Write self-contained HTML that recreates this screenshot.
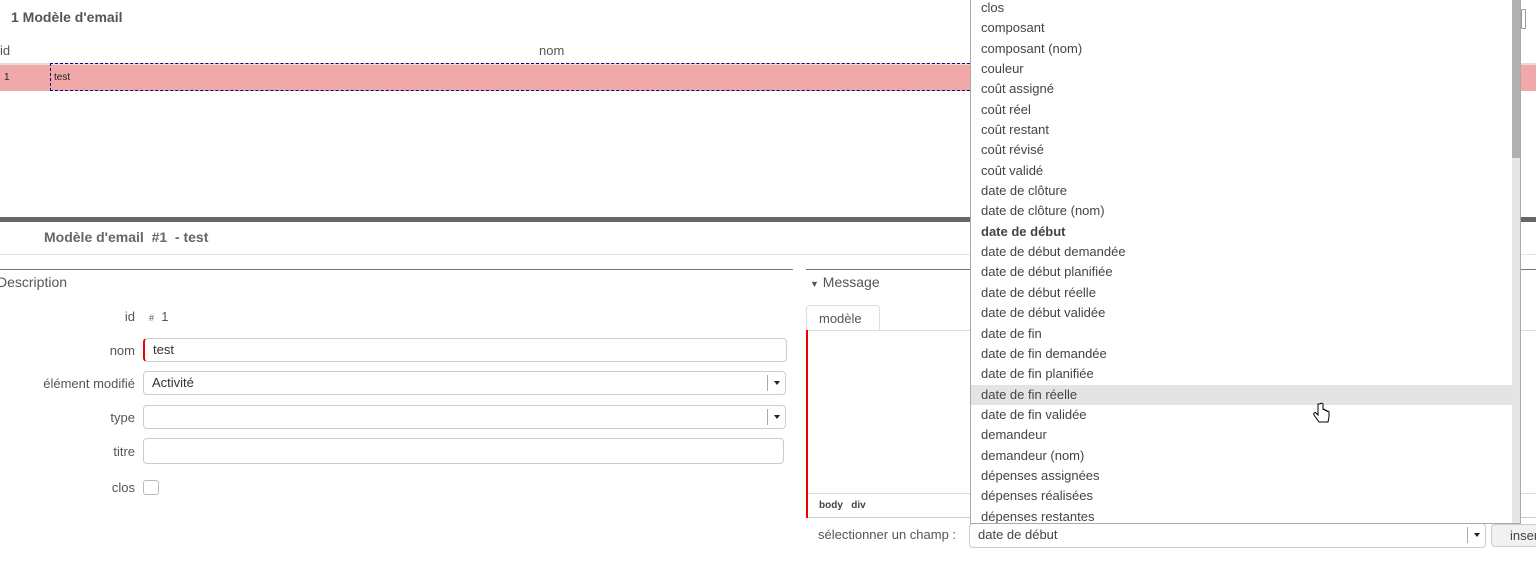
<!DOCTYPE html>
<html><head><meta charset="utf-8"><style>
*{box-sizing:border-box;margin:0;padding:0}
body{width:1536px;height:587px;overflow:hidden;background:#fff;font-family:"Liberation Sans",sans-serif;font-size:13px;color:#555;position:relative}
.a{position:absolute}
.inp{position:absolute;border:1px solid #ccc;border-radius:4px;background:#fff;height:24px;padding:3px 8px;color:#333}
.arr{position:absolute;right:0;top:3px;width:18px;height:16px;border-left:1px solid #aaa}
.arr:after{content:"";position:absolute;left:6px;top:6px;border:3.5px solid transparent;border-top:4px solid #222}
.lbl{position:absolute;right:1401px;text-align:right;width:140px}
.dd{position:absolute;left:970px;top:-2px;width:551px;height:526px;border:1px solid #aaa;border-top:none;background:#fff;overflow:hidden}
.dd div{height:20.35px;line-height:20.35px;padding-left:10px;color:#444}
</style></head><body>
<div class="a" style="left:11px;top:9px;font-weight:bold;font-size:14px;color:#555">1 Modèle d'email</div>
<div class="a" style="left:0;top:43px">id</div>
<div class="a" style="left:539px;top:43px">nom</div>
<div class="a" style="left:0;top:63px;width:1536px;height:28px;background:#f0a8a8;border-top:2px solid #ddd"></div>
<div class="a" style="left:4px;top:72px;font-size:10px;color:#222">1</div>
<div class="a" style="left:50px;top:63px;width:940px;height:28px;border:1px dashed #00008b;border-right:none;font-size:10px;color:#222;padding:8px 0 0 3px">test</div>
<div class="a" style="left:1521px;top:9px;width:5px;height:20px;border:1px solid #999;border-radius:1px"></div>
<div class="a" style="left:0;top:217px;width:1536px;height:5px;background:#666"></div>
<div class="a" style="left:44px;top:229px;font-weight:bold;font-size:14px;color:#666">Modèle d'email &nbsp;#1 &nbsp;- test</div>
<div class="a" style="left:0;top:254px;width:1536px;height:1px;background:#e5e5e5"></div>
<div class="a" style="left:0;top:269px;width:793px;height:1px;background:#777"></div>
<div class="a" style="left:-3px;top:274px;font-size:14px">Description</div>
<div class="a" style="left:806px;top:269px;width:730px;height:1px;background:#777"></div>
<div class="a" style="left:810px;top:274px;font-size:14px"><span style="font-size:9px">▼</span> Message</div>
<div class="lbl" style="top:309px">id</div>
<div class="a" style="left:149px;top:309px"><span style="font-size:9px">#</span> &nbsp;1</div>
<div class="lbl" style="top:343px">nom</div>
<div class="inp" style="left:143px;top:338px;width:644px;border-left:2px solid #e00">test</div>
<div class="lbl" style="top:376px">élément modifié</div>
<div class="inp" style="left:143px;top:371px;width:643px">Activité<span class="arr"></span></div>
<div class="lbl" style="top:410px">type</div>
<div class="inp" style="left:143px;top:405px;width:643px"><span class="arr"></span></div>
<div class="lbl" style="top:444px">titre</div>
<div class="inp" style="left:143px;top:438px;width:641px;height:26px"></div>
<div class="lbl" style="top:480px">clos</div>
<div class="a" style="left:143px;top:480px;width:16px;height:15px;border:1px solid #bbb;border-radius:3px"></div>
<div class="a" style="left:806px;top:305px;width:74px;height:26px;border:1px solid #ddd;border-bottom:none;border-radius:4px 4px 0 0;padding:5px 0 0 12px">modèle</div>
<div class="a" style="left:806px;top:330px;width:730px;height:1px;background:#ddd"></div>
<div class="a" style="left:806px;top:330px;width:2px;height:188px;background:#e00"></div>
<div class="a" style="left:808px;top:493px;width:728px;height:1px;background:#ddd"></div>
<div class="a" style="left:808px;top:517px;width:728px;height:1px;background:#ccc"></div>
<div class="a" style="left:819px;top:500px;font-size:10px;font-weight:bold;color:#444">body &nbsp;&nbsp;div</div>
<div class="a" style="left:818px;top:527px">sélectionner un champ :</div>
<div class="inp" style="left:969px;top:523px;width:517px;height:25px;color:#444">date de début<span class="arr"></span></div>
<div class="a" style="left:1491px;top:524px;width:60px;height:23px;border:1px solid #ccc;border-radius:4px;background:#f1f1f1;padding:3px 0 0 18px;color:#444">inser</div>
<div class="dd">
<div>clos</div><div>composant</div><div>composant (nom)</div><div>couleur</div><div>coût assigné</div><div>coût réel</div><div>coût restant</div><div>coût révisé</div><div>coût validé</div><div>date de clôture</div><div>date de clôture (nom)</div><div style="font-weight:bold">date de début</div><div>date de début demandée</div><div>date de début planifiée</div><div>date de début réelle</div><div>date de début validée</div><div>date de fin</div><div>date de fin demandée</div><div>date de fin planifiée</div><div style="background:#e4e4e4">date de fin réelle</div><div>date de fin validée</div><div>demandeur</div><div>demandeur (nom)</div><div>dépenses assignées</div><div>dépenses réalisées</div><div>dépenses restantes</div>
<span class="a" style="right:0;top:0;width:8px;height:530px;background:#e6e6e6"></span>
<span class="a" style="right:0;top:0;width:8px;height:160px;background:#b0b0b0"></span>
</div>
<svg class="a" style="left:1313px;top:402px" width="18" height="24" viewBox="0 0 18 24"><path d="M5 2v11l-2-2c-1-1-3 0-2 2l5 7h9l1-5v-5c0-1-2-1-2 0v-1c0-1-2-1-2 0v-1c0-1-2-1-2 0V2c0-1-3-1-3 0z" fill="#fff" stroke="#000" stroke-width="1"/></svg>
</body></html>
